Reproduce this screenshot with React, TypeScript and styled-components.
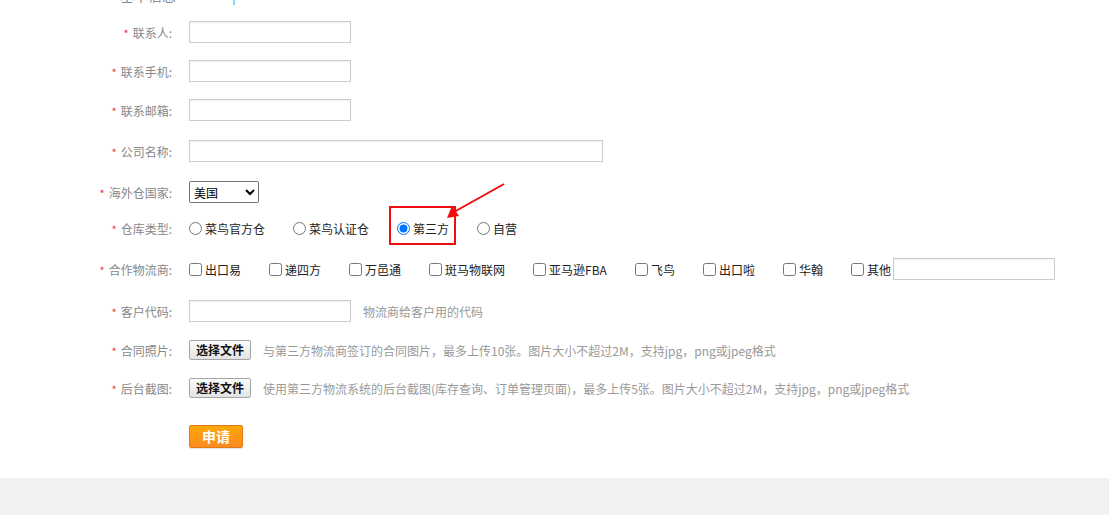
import React from 'react';
import styled, { createGlobalStyle } from 'styled-components';

const GlobalStyle = createGlobalStyle`
    html, body {
        margin: 0;
        padding: 0;
        background: #f2f2f2;
    }
    body {
        font-family: "Noto Sans CJK SC", "Noto Sans", sans-serif;
        font-size: 12px;
        color: #333;
    }
`

const Page = styled.div`
    display: flex;
    flex-direction: column;
    min-height: 515px;
    overflow: hidden;
`
const FormPanel = styled.div`
    position: relative;
    background: #fff;
    padding-bottom: 30px;
`
// only the bottom edge of the section title is still visible after scrolling
const TopTitle = styled.div`
    height: 12px;
    overflow: hidden;
    display: flex;
    align-items: flex-end;
    padding-left: 120px;
    font-size: 14px;
    color: #888;
    span {
        display: block;
        line-height: 14px;
        margin-bottom: 10px;
    }
    b {
        color: #1a8fd6;
        font-weight: normal;
        margin-left: 56px;
    }
`
const Row = styled.div<{ $h: number }>`
    display: flex;
    align-items: center;
    height: ${p => p.$h}px;
`
const Label = styled.label`
    flex-shrink: 0;
    width: 172px;
    margin-right: 17px;
    text-align: right;
    color: #888;
    font-size: 12px;
    white-space: nowrap;
`
const Star = styled.i`
    font-style: normal;
    color: #f0343c;
    font-size: 11px;
    margin-right: 4px;
`
const TextInput = styled.input<{ $w?: number }>`
    box-sizing: border-box;
    width: ${p => p.$w ?? 162}px;
    height: 22px;
    margin: 0;
    padding: 0 4px;
    border: 1px solid #ccc;
    box-shadow: inset 0 1px 2px rgba(0, 0, 0, 0.06);
    outline: none;
    font-size: 12px;
    font-family: inherit;
`
const Select = styled.select`
    box-sizing: border-box;
    width: 70px;
    height: 22px;
    margin: 0;
    border: 1px solid #767676;
    border-radius: 2px;
    background: #fff;
    color: #000;
    font-size: 12px;
    font-family: inherit;
`
const Options = styled.div`
    display: flex;
    align-items: center;
`
const Option = styled.label<{ $marked?: boolean }>`
    position: relative;
    display: flex;
    align-items: center;
    margin-right: 28px;
    color: #222;
    font-size: 12px;
    white-space: nowrap;
    input {
        width: 13px;
        height: 13px;
        margin: 0 3px 0 0;
    }
    &::after {
        content: '';
        display: ${p => (p.$marked ? 'block' : 'none')};
        position: absolute;
        left: -8px;
        right: -7px;
        top: -14px;
        bottom: -8px;
        border: 2px solid #f00c0c;
    }
`
const OtherInput = styled(TextInput)`
    margin-left: -26px;
`
const Hint = styled.span`
    color: #999;
    font-size: 12px;
    margin-left: 12px;
    white-space: nowrap;
`
const FileButton = styled.button`
    box-sizing: border-box;
    height: 20px;
    padding: 0 6px;
    border: 1px solid #a6a6a6;
    border-radius: 2px;
    background: linear-gradient(#fbfbfb, #e3e3e3);
    color: #111;
    font-size: 12px;
    font-weight: bold;
    font-family: inherit;
    line-height: 18px;
`
const SubmitRow = styled.div`
    padding: 21px 0 0 189px;
`
const SubmitButton = styled.button`
    box-sizing: border-box;
    width: 54px;
    height: 23px;
    padding: 0;
    border: 1px solid #e37b12;
    border-radius: 2px;
    background: linear-gradient(#ffa70a, #fb8a22);
    box-shadow: 0 1px 1px rgba(0, 0, 0, 0.12);
    color: #fff;
    font-size: 14px;
    font-weight: bold;
    font-family: inherit;
    line-height: 21px;
`
const Arrow = styled.svg`
    position: absolute;
    left: 440px;
    top: 178px;
    width: 70px;
    height: 45px;
`
const Footer = styled.div`
    flex: 1;
    background: #f2f2f2;
`

const carriers = ['出口易', '递四方', '万邑通', '斑马物联网', '亚马逊FBA', '飞鸟', '出口啦', '华翰', '其他']
const storeTypes = ['菜鸟官方仓', '菜鸟认证仓', '第三方', '自营']

const Required = ({ children }: { children: React.ReactNode }) => (
    <Label>
        <Star>*</Star>
        {children}
    </Label>
)

export default function App() {
    return (
        <Page>
            <GlobalStyle />
            <FormPanel>
                <TopTitle>
                    <span>
                        基本信息<b>|</b>
                    </span>
                </TopTitle>
                <Row $h={40}>
                    <Required>联系人:</Required>
                    <TextInput />
                </Row>
                <Row $h={38}>
                    <Required>联系手机:</Required>
                    <TextInput />
                </Row>
                <Row $h={40}>
                    <Required>联系邮箱:</Required>
                    <TextInput />
                </Row>
                <Row $h={42}>
                    <Required>公司名称:</Required>
                    <TextInput $w={414} />
                </Row>
                <Row $h={40}>
                    <Required>海外仓国家:</Required>
                    <Select defaultValue="us">
                        <option value="us">美国</option>
                        <option value="uk">英国</option>
                        <option value="de">德国</option>
                    </Select>
                </Row>
                <Row $h={32}>
                    <Required>仓库类型:</Required>
                    <Options>
                        {storeTypes.map(t => (
                            <Option key={t} $marked={t === '第三方'}>
                                <input type="radio" name="storeType" defaultChecked={t === '第三方'} />
                                {t}
                            </Option>
                        ))}
                    </Options>
                </Row>
                <Row $h={50}>
                    <Required>合作物流商:</Required>
                    <Options>
                        {carriers.map(c => (
                            <Option key={c}>
                                <input type="checkbox" />
                                {c}
                            </Option>
                        ))}
                        <OtherInput />
                    </Options>
                </Row>
                <Row $h={34}>
                    <Required>客户代码:</Required>
                    <TextInput />
                    <Hint>物流商给客户用的代码</Hint>
                </Row>
                <Row $h={44}>
                    <Required>合同照片:</Required>
                    <FileButton>选择文件</FileButton>
                    <Hint>与第三方物流商签订的合同图片，最多上传10张。图片大小不超过2M，支持jpg，png或jpeg格式</Hint>
                </Row>
                <Row $h={32}>
                    <Required>后台截图:</Required>
                    <FileButton>选择文件</FileButton>
                    <Hint>使用第三方物流系统的后台截图(库存查询、订单管理页面)，最多上传5张。图片大小不超过2M，支持jpg，png或jpeg格式</Hint>
                </Row>
                <SubmitRow>
                    <SubmitButton>申请</SubmitButton>
                </SubmitRow>
                <Arrow viewBox="0 0 70 45">
                    <line x1="64" y1="6" x2="14" y2="34" stroke="#f00c0c" strokeWidth="2" />
                    <polygon points="7,40 12,28 19,38" fill="#f00c0c" />
                </Arrow>
            </FormPanel>
            <Footer />
        </Page>
    );
}
